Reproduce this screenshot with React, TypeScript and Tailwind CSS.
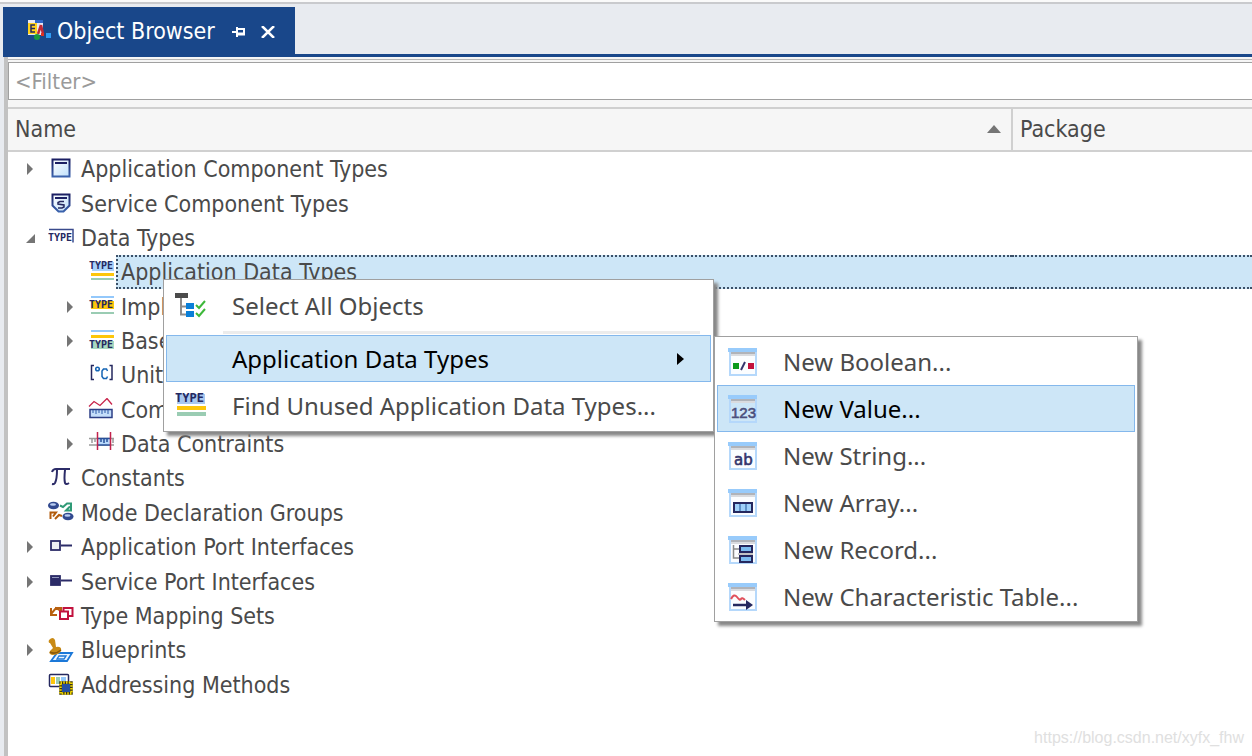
import React from "react";

const TypeText: React.FC<{ y: number; x?: number; size?: number }> = ({ y, x = 1, size = 10 }) => (
  <text x={x} y={y} fontSize={size} fontWeight="bold" fontFamily="DejaVu Sans Mono, monospace" fill="#25285f">
    TYPE
  </text>
);

const ComponentIcon = () => (
  <>
    <rect x="4.5" y="2.5" width="17" height="17" fill="url(#panel)" stroke="url(#navy)" strokeWidth="2" />
    <path d="M7 6h12" stroke="#1b1f63" strokeWidth="2" />
  </>
);

const ServiceIcon = () => (
  <>
    <path d="M4.5 2.5h17v11l-6 6h-5l-6-6z" fill="url(#panel)" stroke="url(#navy)" strokeWidth="2" />
    <path d="M7 6h12" stroke="#1b1f63" strokeWidth="2" />
    <path d="M16 9.500h-4l-2 1v1.500l6 1v2l-2 1h-4" fill="none" stroke="#25285f" strokeWidth="1.500" />
  </>
);

const DataTypeIcon = () => (
  <>
    <path d="M1 3.500h24v13" fill="none" stroke="#3a4a8c" strokeWidth="1.500" />
    <TypeText y={15} x={0} />
  </>
);

const AppTypeIcon = () => (
  <>
    <rect x="4" y="2" width="22" height="9" fill="#a9d2fb" />
    <TypeText y={9} />
    <rect x="3" y="13" width="23" height="3" fill="#fdc60b" />
    <rect x="3" y="18" width="23" height="2" fill="#9accb3" />
  </>
);

const ImplTypeIcon = () => (
  <>
    <rect x="3" y="1" width="23" height="2" fill="#93c8fb" />
    <rect x="3" y="6" width="23" height="8" fill="#fdc60b" />
    <TypeText y={13} />
    <rect x="3" y="17" width="23" height="2" fill="#9accb3" />
  </>
);

const BaseTypeIcon = () => (
  <>
    <rect x="3" y="1" width="23" height="2" fill="#93c8fb" />
    <rect x="3" y="6" width="23" height="3" fill="#fdc60b" />
    <rect x="3" y="12" width="23" height="8" fill="#a8d8c0" />
    <TypeText y={19} />
  </>
);

const UnitIcon = () => (
  <>
    <path d="M6 2.500H3.500v14H6M21.500 2.500h2.500v14h-2.500" fill="none" stroke="#25285f" strokeWidth="1.500" />
    <circle cx="9.500" cy="6" r="1.800" fill="none" stroke="#1464b4" strokeWidth="1.500" />
    <path d="M19.500 8l-1-2h-3l-1.500 2v5.500l1.500 2h3l1-2" fill="none" stroke="#1464b4" strokeWidth="1.500" />
  </>
);

const ComputeIcon = () => (
  <>
    <path d="M1 8.500l5-5 6 4 7-7 5 6" fill="none" stroke="#c8234a" strokeWidth="1.300" />
    <rect x="2" y="11.500" width="22" height="8" fill="#c4defa" stroke="#2c3f86" strokeWidth="1.500" />
    <path d="M5 12v3M8 12v4M11 12v3M14 12v4M17 12v3M20 12v4" stroke="#2c5aa8" />
  </>
);

const ConstraintIcon = () => (
  <>
    <path d="M1 6.500h25M1 13h25M4 7v4M7 7v3M25 7v4" stroke="#9a9a9a" strokeWidth="1.500" />
    <rect x="10" y="6" width="12" height="7" fill="#b8d8fa" />
    <path d="M10 6.500h12M10 13h12M13 7v3M16 7v4M19 7v3" stroke="#28509a" strokeWidth="1.500" />
    <path d="M9.500 0v18M22.500 0v18" stroke="#c2224c" strokeWidth="1.500" />
  </>
);

const PiIcon = () => (
  <path d="M4 6q1-3 4-3h14M9 4q0 9-2 13-1 1.500-3 1M17 4q-1 9 0 13 1 2 4 0" fill="none" stroke="#2c2c68" strokeWidth="2" />
);

const ModeIcon = () => (
  <>
    <ellipse cx="5.500" cy="4.500" rx="5.500" ry="3.800" fill="#31498f" />
    <ellipse cx="5" cy="3.500" rx="3" ry="1.300" fill="#b9cdf2" />
    <ellipse cx="20" cy="15.500" rx="5.500" ry="3.800" fill="#31498f" />
    <ellipse cx="19.500" cy="14.500" rx="3" ry="1.300" fill="#b9cdf2" />
    <path d="M12 4.500l3 1.500 4-3.500h4v7h-5l4-4" fill="none" stroke="#2f9a76" strokeWidth="2" />
    <path d="M14 15l-3-1-4 4M2.500 18v-6.500H8l-3 4" fill="none" stroke="#b35c0c" strokeWidth="2" />
  </>
);

const AppPortIcon = () => (
  <>
    <rect x="3" y="6" width="9" height="9" fill="#eef0f3" stroke="#2c2c68" strokeWidth="1.800" />
    <path d="M13 10.500h11" stroke="#2c2c68" strokeWidth="2" />
  </>
);

const ServicePortIcon = () => (
  <>
    <rect x="3" y="6" width="9" height="9" fill="#2c2c68" stroke="#2c2c68" strokeWidth="1.800" />
    <path d="M4 7.500h7" stroke="#9298bd" />
    <path d="M13 10.500h11" stroke="#2c2c68" strokeWidth="2" />
  </>
);

const MappingIcon = () => (
  <>
    <path d="M3 4v7h6M3 10l5-6 8 5M7 4h6v3" fill="none" stroke="#b8600f" strokeWidth="2" />
    <rect x="15.500" y="4" width="9" height="8" fill="#fff" stroke="#c2123e" strokeWidth="2" />
    <rect x="12" y="7.500" width="8" height="7.500" fill="#fff" stroke="#c2123e" strokeWidth="2" />
  </>
);

const BlueprintIcon = () => (
  <>
    <path d="M9 15h15l-5 8H3z" fill="#e8f3ff" stroke="#1b78d8" strokeWidth="1.800" />
    <path d="M11 18h7l-2 3H9z" fill="none" stroke="#1b78d8" strokeWidth="1.300" />
    <path d="M1 2q4-4 6 0l1 7q6-1 5 4-2 4-9 4-4-1-2-4l3-3-3-5q-2 0-1-3z" fill="#c98a14" />
    <path d="M2 14q5 3 11-2" fill="none" stroke="#8a5808" strokeWidth="1.500" />
  </>
);

const AddressingIcon = () => (
  <>
    <rect x="1.500" y="1.500" width="19" height="12" rx="1" fill="#fff" stroke="#25285f" strokeWidth="1.500" />
    <rect x="3" y="4" width="4" height="7" fill="#fdc60b" />
    <rect x="8" y="4" width="4" height="7" fill="#9accb3" />
    <rect x="13" y="4" width="5" height="7" fill="#93c8fb" />
    <rect x="12.500" y="9.500" width="11" height="11" fill="#2c2c20" stroke="#3a3510" strokeWidth="2.500" />
    <rect x="12.500" y="9.500" width="11" height="11" fill="none" stroke="#f4d800" strokeWidth="2.500" strokeDasharray="1.500 1.250" />
    <rect x="14" y="11" width="8" height="8" fill="#2450a4" />
  </>
);

interface TreeItem {
  label: string;
  icon: React.ComponentType;
  depth: number;
  arrow?: "open" | "closed";
  selected?: boolean;
}

const treeItems: TreeItem[] = [
  { label: "Application Component Types", icon: ComponentIcon, depth: 0, arrow: "closed" },
  { label: "Service Component Types", icon: ServiceIcon, depth: 0 },
  { label: "Data Types", icon: DataTypeIcon, depth: 0, arrow: "open" },
  { label: "Application Data Types", icon: AppTypeIcon, depth: 1, selected: true },
  { label: "Implementation Data Types", icon: ImplTypeIcon, depth: 1, arrow: "closed" },
  { label: "Base Types", icon: BaseTypeIcon, depth: 1, arrow: "closed" },
  { label: "Units", icon: UnitIcon, depth: 1 },
  { label: "Computation Methods", icon: ComputeIcon, depth: 1, arrow: "closed" },
  { label: "Data Contraints", icon: ConstraintIcon, depth: 1, arrow: "closed" },
  { label: "Constants", icon: PiIcon, depth: 0 },
  { label: "Mode Declaration Groups", icon: ModeIcon, depth: 0 },
  { label: "Application Port Interfaces", icon: AppPortIcon, depth: 0, arrow: "closed" },
  { label: "Service Port Interfaces", icon: ServicePortIcon, depth: 0, arrow: "closed" },
  { label: "Type Mapping Sets", icon: MappingIcon, depth: 0 },
  { label: "Blueprints", icon: BlueprintIcon, depth: 0, arrow: "closed" },
  { label: "Addressing Methods", icon: AddressingIcon, depth: 0 },
];

const BooleanIcon = () => (
  <>
    <rect x="5" y="16" width="6" height="6" fill="#0b9a1c" />
    <path d="M13 23l4-8" stroke="#34346c" strokeWidth="2" />
    <rect x="20" y="16" width="6" height="6" fill="#c2123e" />
  </>
);

const ValueIcon = () => (
  <text x="3" y="24" fontSize="15" fontFamily="Liberation Sans, sans-serif" fill="#4b4f7c" stroke="#4b4f7c" strokeWidth="0.600">
    123
  </text>
);

const StringIcon = () => (
  <text x="6" y="24" fontSize="15" fontFamily="DejaVu Sans, sans-serif" fill="#34346c" stroke="#34346c" strokeWidth="0.600">
    ab
  </text>
);

const ArrayIcon = () => (
  <>
    <rect x="6" y="15" width="18" height="9" fill="#9fd0f8" stroke="#25285f" strokeWidth="2" />
    <path d="M12 16v7M18 16v7" stroke="#4a7db8" strokeWidth="1.500" />
  </>
);

const RecordIcon = () => (
  <>
    <path d="M5.500 10v13h7M5.500 14h7" fill="none" stroke="#8b8b8b" strokeWidth="1.500" />
    <rect x="12" y="11" width="12" height="6" fill="#7dbdf0" stroke="#25285f" strokeWidth="2" />
    <rect x="12" y="21" width="12" height="6" fill="#7dbdf0" stroke="#25285f" strokeWidth="2" />
    <path d="M10 19h15" stroke="#8b8b8b" />
  </>
);

const TableIcon = () => (
  <>
    <path d="M3 17q3-6 6-2t4 2 4 1" fill="none" stroke="#e0505c" strokeWidth="2" />
    <path d="M5 23h14" stroke="#25285f" strokeWidth="2.500" />
    <path d="M18 18l7 5-7 5z" fill="#25285f" />
  </>
);

const submenuItems = [
  { label: "New Boolean...", icon: BooleanIcon },
  { label: "New Value...", icon: ValueIcon, active: true },
  { label: "New String...", icon: StringIcon },
  { label: "New Array...", icon: ArrayIcon },
  { label: "New Record...", icon: RecordIcon },
  { label: "New Characteristic Table...", icon: TableIcon },
];

const SelectAllIcon = () => (
  <svg viewBox="0 0 34 28" className="h-7 w-[34px]">
    <path d="M7 6v16.500h7M7 14.500h7" fill="none" stroke="#8d8d8d" strokeWidth="2" />
    <rect x="1" y="1" width="13" height="5" fill="#4b4b4b" />
    <rect x="12" y="11" width="8" height="6" fill="#0a7fd8" />
    <rect x="12" y="19" width="8" height="6" fill="#0a7fd8" />
    <path d="M22 13l3 3 6-7M22 21l3 3 6-7" fill="none" stroke="#3db83a" strokeWidth="2" />
  </svg>
);

const FindUnusedIcon = () => (
  <svg viewBox="0 0 34 28" className="h-7 w-[34px]">
    <rect x="3" y="2" width="28" height="10" fill="#a9c8f0" />
    <TypeText y={10} size={12} />
    <rect x="3" y="14" width="29" height="4" fill="#fdc60b" />
    <rect x="3" y="20" width="29" height="4" fill="#9accb3" />
  </svg>
);

const Arrow: React.FC<{ kind?: "open" | "closed" }> = ({ kind }) => (
  <svg viewBox="0 0 24 24" className="h-6 w-6 shrink-0" fill="#757575">
    {kind === "closed" && <path d="M3 6l6 6-6 6z" />}
    {kind === "open" && <path d="M11 8v9H2z" />}
  </svg>
);

const App: React.FC = () => (
  <div className="relative flex min-h-screen flex-col overflow-hidden bg-[#e8ebf0] font-['DejaVu_Sans_Condensed','DejaVu_Sans',sans-serif] text-[#4a4a4a]">
    {/* Shared gradients */}
    <svg className="absolute h-0 w-0" aria-hidden="true">
      <defs>
        <linearGradient id="panel" x1="0" y1="0" x2="1" y2="1">
          <stop offset="0" stopColor="#ffffff" />
          <stop offset="1" stopColor="#bfe0fb" />
        </linearGradient>
        <linearGradient id="navy" x1="0" y1="0" x2="0" y2="1">
          <stop offset="0" stopColor="#1b1f63" />
          <stop offset="1" stopColor="#3a62ac" />
        </linearGradient>
      </defs>
    </svg>

    {/* Tab strip */}
    <header className="border-t-2 border-[#fafafa]">
      <div className="border-t-2 border-[#c9cacd] pt-[3px] pl-[3px]">
        <div className="flex border-b-3 border-[#19478a]">
          <div className="flex h-[47px] w-[292px] items-center bg-[#19478a] pt-0.5 pl-6 text-white">
            <svg viewBox="0 0 26 24" className="mr-1 h-6 w-[26px]">
              <rect x="1" y="0" width="15" height="15" fill="#e8e8f4" />
              <path d="M8 0h8v3H8z" fill="#2f66c8" />
              <rect x="1" y="3" width="9" height="11" fill="#ffd21c" />
              <path d="M8 5H4v7h4M4 8.500h4" fill="none" stroke="#25285f" strokeWidth="1.500" />
              <path d="M14 5l-3 9M14 5l2 9" stroke="#c02838" strokeWidth="2.500" />
              <circle cx="10" cy="17" r="3" fill="#1a9a3c" />
              <rect x="19" y="13" width="5" height="5" fill="#2f9cf4" />
              <rect x="14" y="13" width="3" height="3" fill="#e03020" />
            </svg>
            <span className="grow text-[23px]">Object Browser</span>
            <button type="button" aria-label="Pin" className="mr-[15px]">
              <svg viewBox="0 0 14 12" className="h-3 w-[14px]" fill="none" stroke="#fff" strokeWidth="2">
                <path d="M0 6h5M5 1v10M5 3h7v5" />
                <path d="M5 8h8" strokeWidth="3" />
              </svg>
            </button>
            <button type="button" aria-label="Close" className="mr-5">
              <svg viewBox="0 0 14 12" className="h-3 w-[14px]" fill="none" stroke="#fff" strokeWidth="2.500">
                <path d="M1 0l12 12M13 0L1 12" />
              </svg>
            </button>
          </div>
        </div>
      </div>
    </header>

    <main className="ml-1 flex grow flex-col border-l-4 border-[#c2c2c2] bg-[#f6f6f6] pt-0.5">
      <div className="border-t border-[#b5b5b5] pt-0.5 pb-[7px]">
        <input
          type="text"
          aria-label="Filter"
          placeholder="<Filter>"
          className="block h-[38px] w-full border border-r-0 border-[#a0a0a0] bg-white pl-[6px] text-[22px] placeholder:text-[#9a9a9a] focus:outline-none"
        />
      </div>

      {/* Object tree */}
      <div className="grow bg-white">
        <table className="h-[595px] w-full table-fixed border-collapse text-[23px] leading-7">
          <colgroup>
            <col />
            <col className="w-[240px]" />
          </colgroup>
          <thead>
            <tr className="h-[43px] border-y-2 border-[#d0d0d0] bg-[#f6f6f6]">
              <th className="p-0 pr-2.5 pb-0.5 pl-[7px] text-left font-normal">
                <div className="flex items-center justify-between">
                  Name
                  <svg viewBox="0 0 14 8" className="h-2 w-[14px]" fill="#757575">
                    <path d="M0 8l7-8 7 8z" />
                  </svg>
                </div>
              </th>
              <th className="border-l-2 border-[#d0d0d0] p-0 pb-0.5 pl-[7px] text-left font-normal">Package</th>
            </tr>
          </thead>
          <tbody>
            {treeItems.map((item) => {
              const Icon = item.icon;
              return (
                <tr key={item.label}>
                  <td className="p-0">
                    <div className={item.depth ? "flex h-[34px] items-center pl-14" : "flex h-[34px] items-center pl-4"}>
                      <Arrow kind={item.arrow} />
                      <svg viewBox="0 0 28 24" className="h-6 w-7 shrink-0">
                        <Icon />
                      </svg>
                      <span
                        className={
                          item.selected
                            ? "flex h-full grow items-center border-2 border-r-0 border-dotted border-[#3b5068] bg-[#cde6f7] pl-[3px]"
                            : "pl-[5px]"
                        }
                      >
                        {item.label}
                      </span>
                    </div>
                  </td>
                  <td className="p-0">
                    {item.selected && <div className="h-[34px] border-y-2 border-dotted border-[#3b5068] bg-[#cde6f7]" />}
                  </td>
                </tr>
              );
            })}
          </tbody>
        </table>
      </div>
    </main>

    {/* Context menu */}
    <div
      role="menu"
      className="absolute top-[279px] left-[163px] flex w-[551px] flex-col border border-[#a0a0a0] bg-white p-0.5 font-['Noto_Sans',sans-serif] text-2xl shadow-[4px_4px_3px_#888888]"
    >
      <button type="button" role="menuitem" className="flex h-12 items-center pl-2">
        <SelectAllIcon />
        <span className="pl-6">Select All Objects</span>
      </button>
      <hr className="mt-px mr-[11px] ml-[57px] border-t-3 border-[#ececec]" />
      <button
        type="button"
        role="menuitem"
        className="mt-px flex h-[47px] items-center justify-between border border-[#84b8ec] bg-[#cde6f7] pr-[25px] pl-[65px] text-black"
      >
        Application Data Types
        <svg viewBox="0 0 8 12" className="h-3 w-2">
          <path d="M0 0l7 6-7 6z" />
        </svg>
      </button>
      <button type="button" role="menuitem" className="flex h-[47px] items-center pl-2">
        <FindUnusedIcon />
        <span className="pl-6">Find Unused Application Data Types...</span>
      </button>
    </div>

    {/* Submenu */}
    <div
      role="menu"
      className="absolute top-[336px] left-[714px] w-[424px] border border-[#a0a0a0] bg-white px-0.5 py-px font-['Noto_Sans',sans-serif] text-2xl shadow-[4px_4px_3px_#888888]"
    >
      {submenuItems.map((item) => {
        const Icon = item.icon;
        return (
          <button
            key={item.label}
            type="button"
            role="menuitem"
            className={
              item.active
                ? "flex h-[47px] w-full items-center border border-[#84b8ec] bg-[#cde6f7] pl-2.5 text-black"
                : "flex h-[47px] w-full items-center border border-transparent pl-2.5"
            }
          >
            <svg viewBox="0 0 30 30" className="h-[30px] w-[30px]">
              <rect x="2" y="4" width="26" height="24" fill={item.active ? "#cde6f7" : "#fbfdff"} stroke="#b5d8fb" strokeWidth="2" />
              <rect x="3" y="5" width="24" height="2" fill="#b0b3b9" />
              <rect x="3" y="7" width="24" height="2" fill="#d9dbdf" />
              <rect x="0" y="1" width="29" height="4" fill="#98cbfb" />
              <Icon />
            </svg>
            <span className="pl-[25px]">{item.label}</span>
          </button>
        );
      })}
    </div>

    <a href="https://blog.csdn.net/xyfx_fhw" className="absolute right-2 bottom-1.5 font-['Liberation_Sans',sans-serif] text-base text-[#e0e0e0]">
      https://blog.csdn.net/xyfx_fhw
    </a>
  </div>
);

export default App;
